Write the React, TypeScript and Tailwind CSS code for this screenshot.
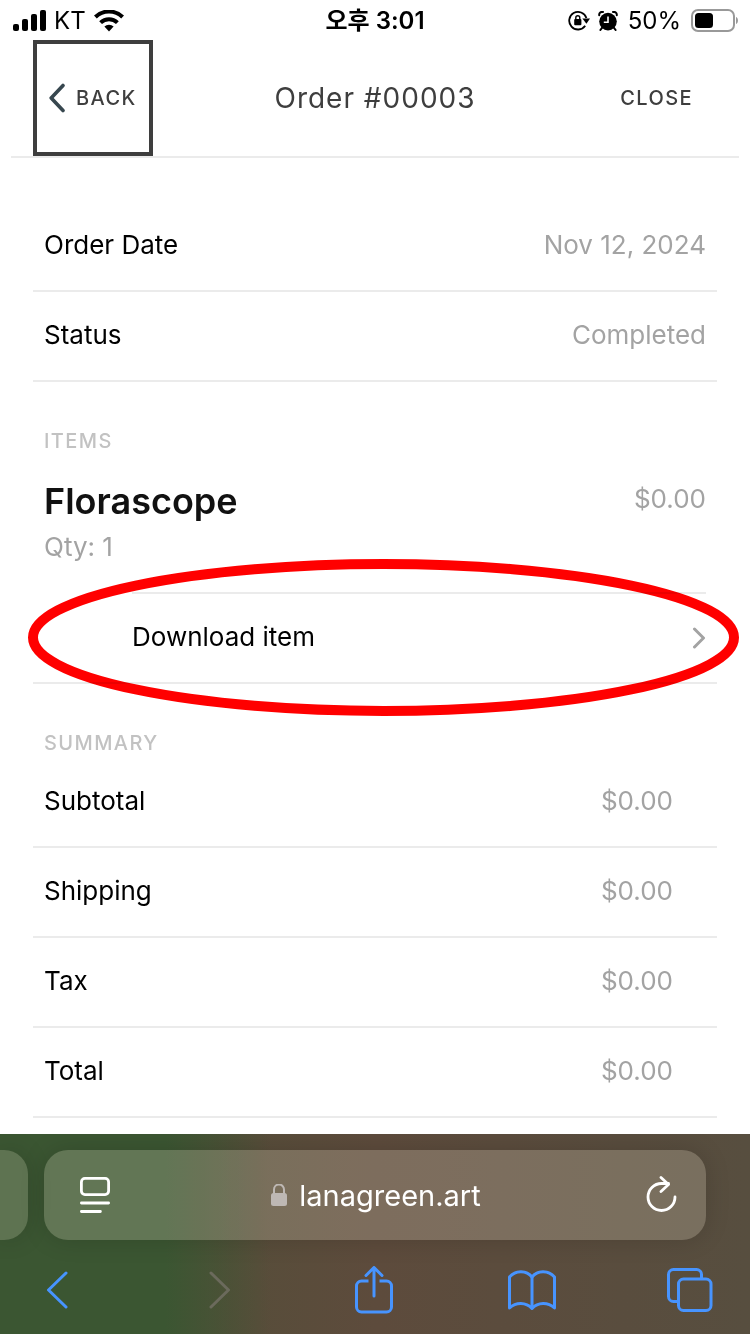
import type { ReactNode } from 'react'

const SUMMARY = [
  { label: 'Subtotal', value: '$0.00' },
  { label: 'Shipping', value: '$0.00' },
  { label: 'Tax', value: '$0.00' },
  { label: 'Total', value: '$0.00' },
]

const DETAILS = [
  { label: 'Order Date', value: 'Nov 12, 2024' },
  { label: 'Status', value: 'Completed' },
]

function StatusBar() {
  return (
    <div className="grid h-10 grid-cols-[1fr_auto_1fr] items-center px-3 pt-0.5 text-2xl text-black">
      <div className="flex items-center gap-2">
        <svg width="34" height="22" viewBox="0 0 34 22" aria-label="Signal">
          <rect x="1" y="14" width="6" height="7" rx="2" />
          <rect x="10" y="9" width="6" height="12" rx="2" />
          <rect x="19" y="4" width="6" height="17" rx="2" />
          <rect x="28" y="0" width="6" height="21" rx="2" />
        </svg>
        <span>KT</span>
        <svg width="30" height="22" viewBox="0 0 30 22" fill="none" stroke="currentColor" strokeWidth="4" aria-label="Wi-Fi">
          <path d="M1.4 7a19.5 19.5 0 0 1 27.2 0" />
          <path d="M6.6 12.600a12 12 0 0 1 16.8 0" />
          <path d="M15 21.400l-4.6-4.8a6.6 6.6 0 0 1 9.2 0z" fill="currentColor" stroke="none" />
        </svg>
      </div>
      <time className="font-semibold">오후 3:01</time>
      <div className="flex items-center justify-end">
        <svg className="mr-2" width="22" height="22" viewBox="0 0 22 22" fill="none" stroke="currentColor" strokeWidth="1.800" aria-label="Rotation lock">
          <path d="M17.200 15.800A8.800 8.800 0 1 1 18.400 8" />
          <path d="M14.400 8.600H22l-3.600 5.200z" fill="currentColor" stroke="none" />
          <rect x="6.200" y="9" width="7.200" height="6.200" rx="1" fill="currentColor" stroke="none" />
          <path d="M7.800 9.600V7.800a2 2 0 0 1 4 0V9.600" strokeWidth="1.400" />
        </svg>
        <svg className="mr-2.5" width="20" height="20" viewBox="0 0 20 20" aria-label="Alarm">
          <circle cx="10" cy="10.600" r="8.800" />
          <path d="M1.200 4.200A3 3 0 0 1 5 1M18.800 4.200A3 3 0 0 0 15 1" fill="none" stroke="currentColor" strokeWidth="2" strokeLinecap="round" />
          <path d="M4.200 16.600L2.400 19M15.800 16.600l1.800 2.400" stroke="currentColor" strokeWidth="2" strokeLinecap="round" />
          <path d="M10 5.400v5.800H5.800" fill="none" stroke="#fff" strokeWidth="1.600" />
        </svg>
        <span className="mr-2.5">50%</span>
        <svg width="47" height="24" viewBox="0 0 47 24" aria-label="Battery">
          <rect x="1" y="1" width="42" height="21" rx="6" fill="none" stroke="#999" strokeWidth="2" />
          <rect x="4" y="4" width="18" height="15" rx="3.500" />
          <path d="M45 8c2.600.8 2.600 6.200 0 7z" fill="#999" />
        </svg>
      </div>
    </div>
  )
}

function Header() {
  return (
    <header className="mx-[11px] grid grid-cols-[1fr_auto_1fr] items-center border-b-2 border-[#ebebeb] text-[#3e3e3e]">
      <button className="ml-[22px] flex h-[116px] w-[120px] items-center gap-2.5 border-4 border-[#3e3e3e] pl-3 text-xl font-medium tracking-[0.07em]">
        <svg className="shrink-0" width="17" height="30" viewBox="0 0 17 30" fill="none" stroke="#37474f" strokeWidth="3.600" strokeLinecap="round" strokeLinejoin="round">
          <path d="M14 2.500L2.200 15l11.800 12.500" />
        </svg>
        BACK
      </button>
      <h1 className="text-[28px] tracking-[1px]">Order #00003</h1>
      <button className="mr-[46px] justify-self-end text-xl font-medium tracking-[0.07em]">CLOSE</button>
    </header>
  )
}

function Row({ label, value, inset = false }: { label: string; value: string; inset?: boolean }) {
  return (
    <div className={`flex h-[90px] items-center justify-between border-b-2 border-[#ebebeb] pb-1 pl-[11px] text-[26px] ${inset ? 'pr-11' : 'pr-[11px]'}`}>
      <dt className="text-black">{label}</dt>
      <dd className="text-[#a3a3a3]">{value}</dd>
    </div>
  )
}

function SectionTitle({ children }: { children: ReactNode }) {
  return <h2 className="pt-[47px] pl-[11px] text-xl leading-6 font-medium tracking-[0.07em] text-[#c2c2c2]">{children}</h2>
}

function Items() {
  return (
    <section>
      <SectionTitle>ITEMS</SectionTitle>
      <div className="mt-6 flex h-[115px] justify-between px-[11px] text-[26px]">
        <div>
          <h3 className="text-[36px] leading-[48px] font-semibold text-[#111]">Florascope</h3>
          <p className="leading-[44px] text-[#a3a3a3]">Qty: 1</p>
        </div>
        <span className="leading-[44px] text-[#a3a3a3]">$0.00</span>
      </div>
      <div className="relative border-b-2 border-[#ebebeb]">
        <a href="#download" className="mr-[11px] ml-[99px] flex h-[90px] items-center justify-between border-t-2 border-[#ebebeb] text-[26px] text-black">
          <span className="pb-1">Download item</span>
          <svg width="14" height="22" viewBox="0 0 14 22" fill="none" stroke="#a3a3a3" strokeWidth="3" strokeLinecap="round" strokeLinejoin="round">
            <path d="M2.500 2l9 9-9 9" />
          </svg>
        </a>
        {/* red marker ring round the download link */}
        <svg className="pointer-events-none absolute -top-[33px] -left-[5px] h-[157px] w-[calc(100%+27px)] mix-blend-multiply" viewBox="0 0 711 157" preserveAspectRatio="none" fill="none" stroke="#ff0000" strokeWidth="10">
          <ellipse cx="355.500" cy="78.500" rx="350.500" ry="73.500" vectorEffect="non-scaling-stroke" />
        </svg>
      </div>
    </section>
  )
}

function BrowserBar() {
  return (
    <footer className="mt-auto h-[200px] overflow-hidden bg-linear-to-r from-[#4c5136] via-[#5d4b3c] via-50% to-[#574e3f]">
      <div className="h-full bg-linear-to-r from-[#3b5632] from-22% to-transparent to-36%">
        <div className="flex gap-4 pt-4">
          <div className="h-[90px] w-7 rounded-r-3xl bg-[#fff5e0]/18 shadow-[0_0_24px_rgba(0,0,0,0.15)]" />
          <div className="mr-11 flex h-[90px] flex-1 items-center justify-between rounded-3xl bg-[#fff5e0]/20 px-7 text-white shadow-[0_0_24px_rgba(0,0,0,0.15)]">
            <button className="pl-2" aria-label="Page settings">
              <svg width="30" height="36" viewBox="0 0 30 36" fill="none" stroke="currentColor" strokeWidth="2.800" strokeLinecap="round">
                <rect x="1.400" y="1.400" width="27.200" height="16.200" rx="3.500" />
                <path d="M1.400 26h27.200M1.400 34.500h19" />
              </svg>
            </button>
            <button className="flex items-center gap-3 pr-1 pt-0.5 text-[29px]">
              <svg width="16" height="24" viewBox="0 0 16 24" className="text-[#beb8b4]">
                <rect y="9" width="16" height="13" rx="2.500" fill="currentColor" />
                <path d="M3 10V5.500a5 5 0 0 1 10 0V10" fill="none" stroke="currentColor" strokeWidth="2" />
              </svg>
              lanagreen.art
            </button>
            <button aria-label="Reload">
              <svg width="32" height="38" viewBox="0 0 32 38" fill="none" stroke="currentColor" strokeWidth="2.800" strokeLinecap="round" strokeLinejoin="round">
                <path d="M29 21A13.500 13.500 0 1 1 15.500 7.500h7" />
                <path d="M15 1.500l7.500 7-7.500 7" />
              </svg>
            </button>
          </div>
        </div>
        <nav className="flex h-[100px] items-center justify-between pr-9 pl-[33px] text-[#4794ff]">
          <button aria-label="Back" className="flex w-12 justify-center">
            <svg width="22" height="38" viewBox="0 0 22 38" fill="none" stroke="currentColor" strokeWidth="3" strokeLinecap="round" strokeLinejoin="round">
              <path d="M20 2L2.500 19 20 36" />
            </svg>
          </button>
          <button aria-label="Forward" className="flex w-12 justify-end pr-2 text-[#6b6a5c]" disabled>
            <svg width="22" height="38" viewBox="0 0 22 38" fill="none" stroke="currentColor" strokeWidth="3" strokeLinecap="round" strokeLinejoin="round">
              <path d="M2 2l17.500 17L2 36" />
            </svg>
          </button>
          <button aria-label="Share" className="flex w-12 justify-center">
            <svg width="38" height="48" viewBox="0 0 38 48" fill="none" stroke="currentColor" strokeWidth="3" strokeLinecap="round" strokeLinejoin="round">
              <path d="M13.500 15H6.500a5 5 0 0 0-5 5v21a5 5 0 0 0 5 5h25a5 5 0 0 0 5-5V20a5 5 0 0 0-5-5h-7" strokeLinecap="butt" />
              <path d="M19 30V2M11 9.500L19 1.500l8 8" />
            </svg>
          </button>
          <button aria-label="Bookmarks" className="flex w-12 justify-center">
            <svg width="48" height="40" viewBox="0 0 48 40" fill="none" stroke="currentColor" strokeWidth="3" strokeLinecap="round" strokeLinejoin="round">
              <path d="M24 7C18.500 0 7.500 0 1.500 7V38C8 32 18 32 24 38.500C30 32 40 32 46.500 38V7C40.500 0 29.500 0 24 7z" />
              <path d="M24 7v31" />
            </svg>
          </button>
          <button aria-label="Tabs" className="flex w-12 justify-center">
            <svg width="46" height="44" viewBox="0 0 46 44" fill="none" stroke="currentColor" strokeWidth="3">
              <path d="M11 33.500H6.500a5 5 0 0 1-5-5v-22a5 5 0 0 1 5-5h23a5 5 0 0 1 5 5V11" />
              <rect x="11.500" y="11" width="32.500" height="31.500" rx="5" />
            </svg>
          </button>
        </nav>
      </div>
    </footer>
  )
}

export default function App() {
  return (
    <div className="flex min-h-screen flex-col bg-white font-['Inter','Noto_Sans_CJK_KR',sans-serif]">
      <StatusBar />
      <Header />
      <main className="px-[33px] pt-11 pb-4">
        <dl>
          {DETAILS.map((d) => (
            <Row key={d.label} label={d.label} value={d.value} />
          ))}
        </dl>
        <Items />
        <SectionTitle>SUMMARY</SectionTitle>
        <dl className="pt-[3px]">
          {SUMMARY.map((s) => (
            <Row key={s.label} label={s.label} value={s.value} inset />
          ))}
        </dl>
      </main>
      <BrowserBar />
    </div>
  )
}
